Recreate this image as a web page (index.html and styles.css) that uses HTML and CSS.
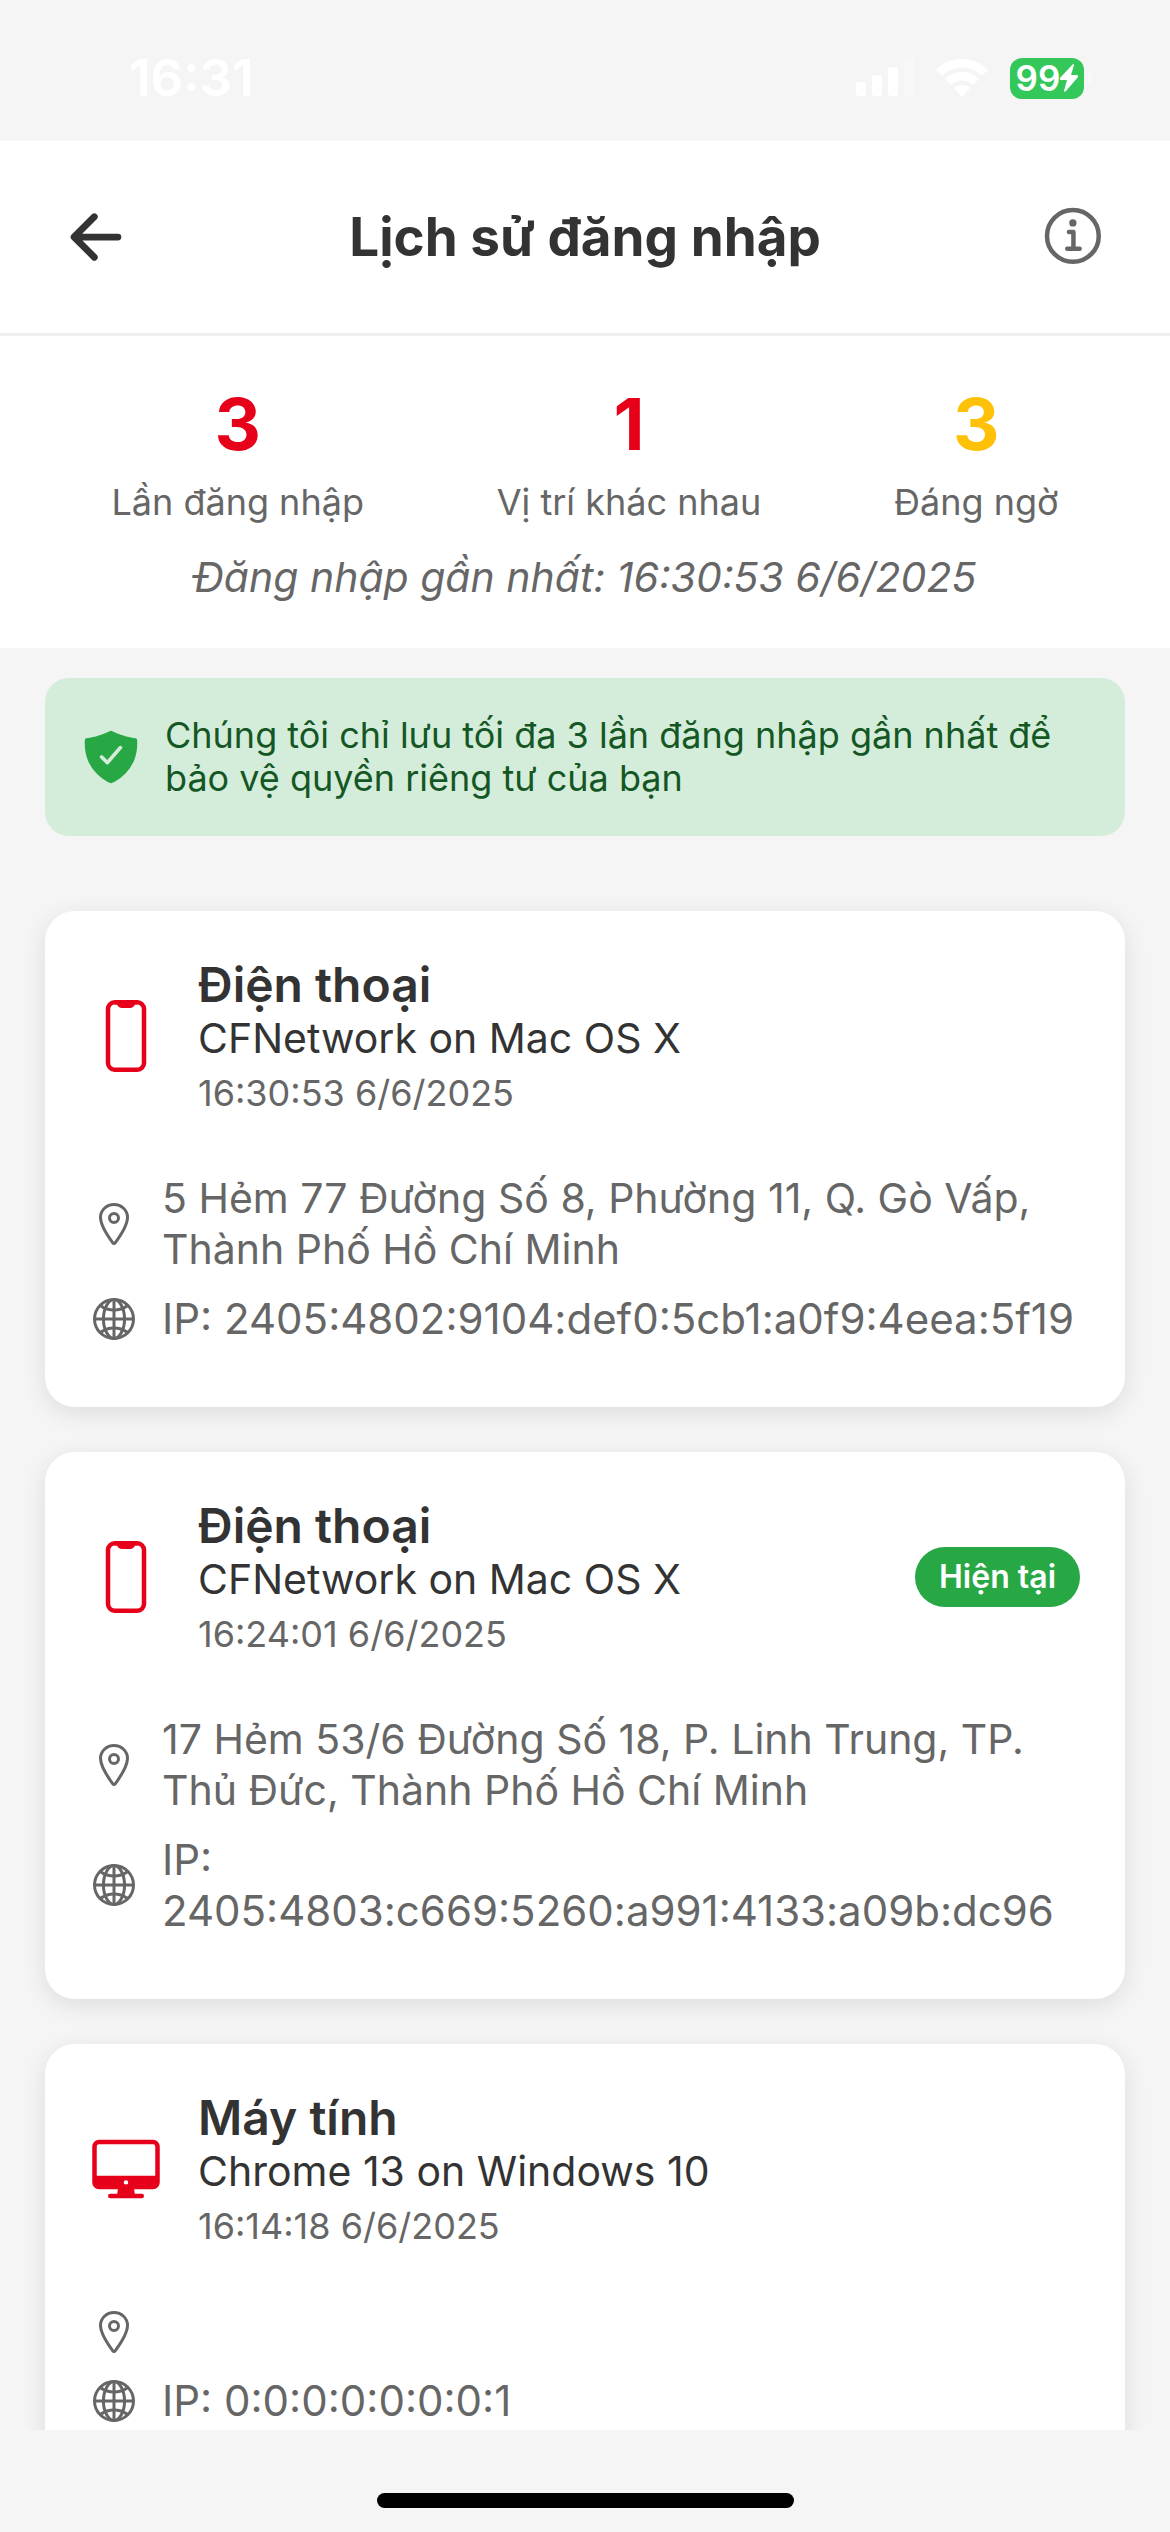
FILE: index.html
```html
<!DOCTYPE html>
<html lang="vi">
<head>
<meta charset="utf-8">
<meta name="viewport" content="width=device-width, initial-scale=1">
<title>Lịch sử đăng nhập</title>
<link rel="stylesheet" href="styles.css">
</head>
<body>
<svg class="sprite" aria-hidden="true">
  <symbol id="phone" viewBox="0 0 512 512">
    <rect x="128" y="16" width="256" height="480" rx="48" fill="none" stroke="currentColor" stroke-width="32" stroke-linejoin="round"/>
    <path d="M176 16h24a8 8 0 018 8 16 16 0 0016 16h64a16 16 0 0016-16 8 8 0 018-8h24" fill="currentColor" stroke="currentColor" stroke-width="32" stroke-linejoin="round"/>
  </symbol>
  <symbol id="desktop" viewBox="0 0 512 512">
    <g stroke="currentColor" stroke-width="32" stroke-linejoin="round" stroke-linecap="round">
      <rect x="32" y="64" width="448" height="320" rx="32" fill="none"/>
      <path d="M304 448l-8-64h-80l-8 64zM368 448H144" fill="currentColor"/>
    </g>
    <path d="M32 304v48a32.09 32.09 0 0032 32h384a32.09 32.09 0 0032-32v-48zm224 64a16 16 0 1116-16 16 16 0 01-16 16z" fill="currentColor"/>
  </symbol>
  <symbol id="pin" viewBox="0 0 512 512">
    <g fill="none" stroke="currentColor" stroke-width="32" stroke-linecap="round" stroke-linejoin="round">
      <path d="M256 48c-79.5 0-144 61.39-144 137 0 87 96 224.87 131.25 272.49a15.77 15.77 0 0025.5 0C304 409.89 400 272.07 400 185c0-75.61-64.5-137-144-137z"/>
      <circle cx="256" cy="192" r="48"/>
    </g>
  </symbol>
  <symbol id="globe" viewBox="0 0 512 512">
    <g fill="none" stroke="currentColor" stroke-width="32">
      <circle cx="256" cy="256" r="208"/>
      <path d="M256 48c-58.07 0-112.67 93.13-112.67 208S197.93 464 256 464s112.67-93.13 112.67-208S314.07 48 256 48z"/>
      <path d="M117.33 117.33c38.24 27.15 86.38 43.34 138.67 43.34s100.43-16.19 138.67-43.34M394.67 394.67c-38.24-27.15-86.38-43.34-138.67-43.34s-100.43 16.19-138.67 43.34" stroke-linecap="round"/>
      <path d="M256 48v416M464 256H48"/>
    </g>
  </symbol>
</svg>

<div class="app">
  <div class="status-bar">
    <span class="clock">16:31</span>
    <div class="indicators">
      <svg class="signal" viewBox="0 0 58 38" fill="#fff">
        <rect x="0" y="23" width="10" height="14" rx="3"/>
        <rect x="16" y="16" width="10" height="21" rx="3"/>
        <rect x="32" y="8" width="10" height="29" rx="3"/>
        <rect x="48" y="0" width="10" height="37" rx="3" opacity=".3"/>
      </svg>
      <svg class="wifi" viewBox="0 0 52 38" fill="#fff">
        <path d="M26 0C36 0 45 4 51 10c1 1 1 1 0 2l-4 4c-1 1-1 1-2 0a28 28 0 00-38 0c-1 1-1 1-2 0l-4-4c-1-1-1-1 0-2C7 4 16 0 26 0z"/>
        <path d="M26 13c6 0 12 2 16 6 1 1 1 1 0 2l-4 4c-1 1-1 1-2 0a15 15 0 00-20 0c-1 1-1 1-2 0l-4-4c-1-1-1-1 0-2 4-4 10-6 16-6z"/>
        <path d="M26 26c3 0 5 1 7 2 1 1 1 1 0 2l-6 7c-1 1-1 1-2 0l-6-7c-1-1-1-1 0-2 2-1 4-2 7-2z"/>
      </svg>
      <div class="battery">
        <span class="battery-body">99<svg class="bolt" viewBox="0 0 18 28" fill="#fff"><path d="M13 0c1 0 1 1 1 1l-3 10h6c1 0 1 1 1 2L6 27c-1 1-2 1-2 0l3-11H1c-1 0-1-1-1-2z"/></svg></span>
        <span class="battery-cap"></span>
      </div>
    </div>
  </div>

  <header class="header">
    <button class="icon-button back" type="button" aria-label="Quay lại">
      <svg viewBox="0 0 512 512" fill="none" stroke="currentColor" stroke-width="48" stroke-linecap="round" stroke-linejoin="round"><path d="M244 400L100 256l144-144M120 256h292"/></svg>
    </button>
    <h1>Lịch sử đăng nhập</h1>
    <button class="icon-button info" type="button" aria-label="Thông tin">
      <svg viewBox="0 0 512 512" fill="none" stroke="currentColor" stroke-width="32" stroke-linecap="round" stroke-linejoin="round">
        <circle cx="248" cy="248" r="184"/>
        <path d="M220 220h32v116M208 340h88"/>
        <circle cx="248" cy="156" r="26" fill="currentColor" stroke="none"/>
      </svg>
    </button>
  </header>

  <section class="summary">
    <div class="stats">
      <div class="stat"><strong>3</strong><span>Lần đăng nhập</span></div>
      <div class="stat"><strong>1</strong><span>Vị trí khác nhau</span></div>
      <div class="stat warning"><strong>3</strong><span>Đáng ngờ</span></div>
    </div>
    <p class="last-login">Đăng nhập gần nhất: 16:30:53 6/6/2025</p>
  </section>

  <main class="content">
    <div class="notice">
      <svg class="shield" viewBox="0 0 512 512" fill="currentColor"><path d="M479.07 111.36a16 16 0 00-13.15-14.74c-86.5-15.52-122.61-26.74-203.33-63.2a16 16 0 00-13.18 0C168.69 69.88 132.58 81.1 46.08 96.62a16 16 0 00-13.15 14.74c-3.85 61.11 4.36 118.05 24.43 169.24A349.47 349.47 0 00129 393.11c53.47 56.73 110.24 81.37 121.07 85.73a16 16 0 0012 0c10.83-4.36 67.6-29 121.07-85.73a349.47 349.47 0 0071.5-112.51c20.07-51.19 28.28-108.13 24.43-169.24zm-131 75.11l-110.8 128a16 16 0 01-11.41 5.53h-.66a16 16 0 01-11.2-4.57l-49.2-48.2a16 16 0 0122.4-22.86l37 36.29 99.7-115.13a16 16 0 0124.2 20.94z"/></svg>
      <p>Chúng tôi chỉ lưu tối đa 3 lần đăng nhập gần nhất để bảo vệ quyền riêng tư của bạn</p>
    </div>

    <ul class="sessions">
      <li class="card">
        <div class="device">
          <svg class="device-icon"><use href="#phone"/></svg>
          <div class="device-text">
            <h2>Điện thoại</h2>
            <p>CFNetwork on Mac OS X</p>
            <time>16:30:53 6/6/2025</time>
          </div>
        </div>
        <div class="details">
          <div class="detail"><svg><use href="#pin"/></svg><span>5 Hẻm 77 Đường Số 8, Phường 11, Q. Gò Vấp, Thành Phố Hồ Chí Minh</span></div>
          <div class="detail ip"><svg><use href="#globe"/></svg><span>IP: 2405:4802:9104:def0:5cb1:a0f9:4eea:5f19</span></div>
        </div>
      </li>
      <li class="card">
        <div class="device">
          <svg class="device-icon"><use href="#phone"/></svg>
          <div class="device-text">
            <h2>Điện thoại</h2>
            <p>CFNetwork on Mac OS X</p>
            <time>16:24:01 6/6/2025</time>
          </div>
          <span class="badge">Hiện tại</span>
        </div>
        <div class="details">
          <div class="detail"><svg><use href="#pin"/></svg><span>17 Hẻm 53/6 Đường Số 18, P. Linh Trung, TP. Thủ Đức, Thành Phố Hồ Chí Minh</span></div>
          <div class="detail ip"><svg><use href="#globe"/></svg><span>IP: 2405:4803:c669:5260:a991:4133:a09b:dc96</span></div>
        </div>
      </li>
      <li class="card">
        <div class="device">
          <svg class="device-icon"><use href="#desktop"/></svg>
          <div class="device-text">
            <h2>Máy tính</h2>
            <p>Chrome 13 on Windows 10</p>
            <time>16:14:18 6/6/2025</time>
          </div>
        </div>
        <div class="details">
          <div class="detail"><svg><use href="#pin"/></svg><span></span></div>
          <div class="detail ip"><svg><use href="#globe"/></svg><span>IP: 0:0:0:0:0:0:0:1</span></div>
        </div>
      </li>
    </ul>
  </main>

  <div class="home-area"><div class="home-indicator"></div></div>
</div>
</body>
</html>
```
FILE: styles.css
```css
* {
  box-sizing: border-box;
  margin: 0;
  padding: 0;
}

body {
  background: #f5f5f5;
  color: #333;
  font-family: Inter, "Liberation Sans", sans-serif;
}

svg {
  display: block;
  flex: none;
}

.sprite {
  position: absolute;
  width: 0;
  height: 0;
}

.app {
  display: flex;
  flex-direction: column;
  height: 100vh;
}

/* Status bar */
.status-bar {
  flex: none;
  display: flex;
  align-items: center;
  justify-content: space-between;
  height: 141px;
  padding: 15px 78px 0 129px;
  color: #fff;
}

.clock {
  font-size: 51px;
  font-weight: 600;
  line-height: 60px;
}

.indicators {
  display: flex;
  align-items: center;
  gap: 22px;
}

.signal {
  width: 58px;
  height: 38px;
}

.wifi {
  width: 52px;
  height: 38px;
}

.battery {
  display: flex;
  align-items: center;
  gap: 4px;
}

.battery-body {
  display: flex;
  align-items: center;
  justify-content: center;
  width: 74px;
  height: 41px;
  border-radius: 12px;
  background: #34c759;
  font-size: 35px;
  font-weight: 600;
  line-height: 41px;
}

.bolt {
  width: 18px;
  height: 28px;
}

.battery-cap {
  width: 4px;
  height: 12px;
  border-radius: 0 4px 4px 0;
  background: #f9f9f9;
}

/* Header */
.header {
  flex: none;
  display: flex;
  align-items: center;
  justify-content: space-between;
  padding: 60px;
  border-bottom: 3px solid #eee;
  background: #fff;
}

.header h1 {
  font-size: 53px;
  font-weight: 700;
  line-height: 72px;
}

.icon-button {
  width: 72px;
  height: 72px;
  border: 0;
  background: none;
  color: #333;
}

.icon-button svg {
  width: 72px;
  height: 72px;
}

.info {
  color: #666;
}

/* Summary */
.summary {
  flex: none;
  padding: 45px;
  background: #fff;
  color: #666;
}

.stats {
  display: flex;
  justify-content: space-around;
}

.stat {
  display: flex;
  flex-direction: column;
  align-items: center;
  gap: 14px;
  font-size: 36px;
  line-height: 43px;
}

.stat strong {
  color: #e60019;
  font-size: 72px;
  line-height: 86px;
}

.warning strong {
  color: #ffc107;
}

.last-login {
  margin-top: 28px;
  font-size: 41px;
  font-style: italic;
  line-height: 51px;
  text-align: center;
}

/* Scrolling content */
.content {
  flex: 1;
  min-height: 0;
  padding: 30px 45px 0;
  overflow: hidden;
}

.notice {
  display: flex;
  align-items: center;
  gap: 24px;
  padding: 36px;
  border-radius: 24px;
  background: #d4edda;
  color: #155724;
  font-size: 36px;
  line-height: 43px;
}

.shield {
  width: 60px;
  height: 60px;
  color: #28a745;
}

.sessions {
  display: flex;
  flex-direction: column;
  gap: 45px;
  margin-top: 75px;
  list-style: none;
}

.card {
  padding: 45px;
  border-radius: 30px;
  background: #fff;
  box-shadow: 0 6px 24px rgba(0, 0, 0, 0.1);
}

.device {
  display: flex;
  align-items: center;
  gap: 36px;
}

.device-icon {
  width: 72px;
  height: 72px;
  color: #e60019;
}

.device-text {
  flex: 1;
}

.device-text h2 {
  font-size: 48px;
  font-weight: 600;
  line-height: 57px;
}

.device-text p {
  font-size: 41px;
  line-height: 51px;
}

.device-text time {
  display: block;
  margin-top: 8px;
  color: #666;
  font-size: 36px;
  line-height: 43px;
}

.badge {
  padding: 12px 24px;
  border-radius: 36px;
  background: #28a745;
  color: #fff;
  font-size: 32px;
  font-weight: 600;
  line-height: 36px;
}

.details {
  margin-top: 58px;
}

.detail {
  display: flex;
  align-items: center;
  gap: 24px;
  min-height: 51px;
  margin-bottom: 18px;
  color: #666;
  font-size: 41px;
  line-height: 51px;
}

.detail svg {
  width: 48px;
  height: 48px;
}

.ip {
  font-size: 42px;
}

/* Home indicator */
.home-area {
  flex: none;
  padding: 63px 0 24px;
}

.home-indicator {
  width: 417px;
  max-width: 40%;
  height: 15px;
  margin: 0 auto;
  border-radius: 8px;
  background: #000;
}
```
